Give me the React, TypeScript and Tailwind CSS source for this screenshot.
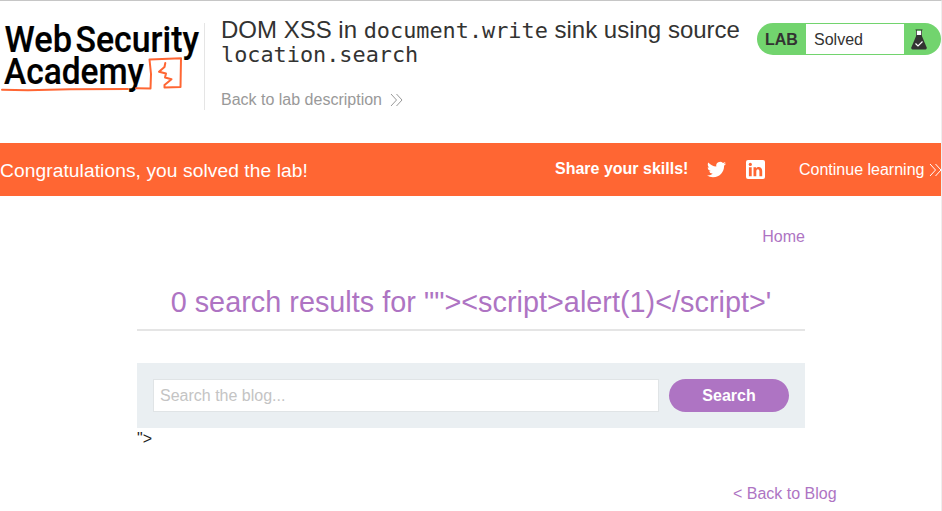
import React from "react";

const sans = "font-['Liberation_Sans',Arial,sans-serif]";

function Logo() {
  return (
    <svg width="204" height="90" viewBox="0 10 204 90" className="block shrink-0 overflow-visible" aria-label="Web Security Academy">
      <g fill="#000" stroke="#000" strokeWidth="0.2" fontFamily="Roboto, sans-serif" fontWeight="500" fontSize="37">
        <text x="4.5" y="51.5" textLength="67.5" lengthAdjust="spacingAndGlyphs">Web</text>
        <text x="75.5" y="51.5" textLength="123.5" lengthAdjust="spacingAndGlyphs">Security</text>
        <text x="4" y="84" textLength="140" lengthAdjust="spacingAndGlyphs">Academy</text>
      </g>
      <g fill="none" stroke="#ff6633" strokeWidth="2" strokeLinejoin="round" strokeLinecap="round">
        <path d="M2 89.7 L28 90.2 L70 89.3 L128 89" />
        <path d="M136 88.3 L150.5 88.5 L151 74 L149.5 59.5 L181 58.3 L180.5 87 L164.5 87.5 L164.5 85 L171.5 79.2 L165 77.5 L166 73.5 L159 71.8 L164.5 67 L165.3 63" />
      </g>
    </svg>
  );
}

function Chevrons({ color }: { color: string }) {
  return (
    <svg width="13" height="14" viewBox="0 0 13 14" fill="none" stroke={color} strokeWidth="1" className="block shrink-0">
      <path d="M1 1 L6.5 7 L1 13 M6.5 1 L12 7 L6.5 13" />
    </svg>
  );
}

function Flask() {
  return (
    <svg width="16" height="21" viewBox="0 0 16 21" className="block">
      <path d="M5 2 H11 V7 H5 Z" fill="#fff" />
      <path d="M5.5 6 H10.5 L15.7 18.5 Q16 20.4 14.5 20.4 H1.5 Q0 20.4 .3 18.5 Z" fill="#333332" />
      <path d="M4.5 .8 H11.5 M5.5 1 V7 M10.5 1 V7" stroke="#333332" strokeWidth="0.8" fill="none" />
      <path d="M4.5 14.5 L7 17 L11.5 12.5" stroke="#fff" strokeWidth="1.2" fill="none" />
    </svg>
  );
}

function LabStatus() {
  return (
    <div className="mt-[22px] flex h-8 w-[184px] shrink-0 items-center overflow-hidden rounded-full bg-[#72d46e] text-[#333332]">
      <span className="w-[49px] pl-2 pt-[2px] text-[16px] leading-6 font-bold">LAB</span>
      <span className="h-[30px] w-[98px] bg-white pl-2 text-base leading-[31px]">Solved</span>
      <span className="pl-[7px]">
        <Flask />
      </span>
    </div>
  );
}

export default function App() {
  return (
    <div className={`${sans} h-[511px] w-[942px] overflow-hidden border-t border-r border-t-[#c6c6c6] border-r-[#eeeeee] bg-white text-[#333332]`}>
      <header className="flex h-[142px]">
        <div className="w-[204px] shrink-0 pt-[9px]">
          <Logo />
        </div>
        <div className="mt-[22px] h-[87px] w-px shrink-0 bg-[#e5e5e5]" />
        <div className="ml-4 w-[536px] shrink-0 pt-[17px]">
          <h1 className="text-[24px] leading-[24px] whitespace-nowrap">
            <span className="block h-[25px]">
              DOM XSS in <code className="font-['DejaVu_Sans_Mono',monospace] text-[21.85px] leading-none">document.write</code> sink using source
            </span>
            <code className="block h-6 font-['DejaVu_Sans_Mono',monospace] text-[21.85px] leading-[24px]">location.search</code>
          </h1>
          <a className="mt-[23px] flex items-center gap-[8px] text-base leading-5 text-[#999999]">
            Back to lab description
            <Chevrons color="#999999" />
          </a>
        </div>
        <LabStatus />
      </header>

      <section className="flex h-[53px] items-center overflow-hidden bg-[#ff6633] text-white">
        <p className="w-[555px] shrink-0 pt-[2px] text-[19.2px] leading-6 tracking-[0.08px]">Congratulations, you solved the lab!</p>
        <p className="w-[152px] shrink-0 pb-[1px] text-base font-bold">Share your skills!</p>
        <svg width="19" height="19" viewBox="0 0 24 24" fill="#fff" className="shrink-0">
          <path d="M23.953 4.57a10 10 0 01-2.825.775 4.958 4.958 0 002.163-2.723 9.9 9.9 0 01-3.127 1.184 4.92 4.92 0 00-8.384 4.482C7.69 8.095 4.067 6.13 1.64 3.162a4.822 4.822 0 00-.666 2.475c0 1.71.87 3.213 2.188 4.096a4.904 4.904 0 01-2.228-.616v.06a4.923 4.923 0 003.946 4.827 4.996 4.996 0 01-2.212.085 4.936 4.936 0 004.604 3.417 9.867 9.867 0 01-6.102 2.105c-.39 0-.779-.023-1.17-.067a13.995 13.995 0 007.557 2.209c9.053 0 13.998-7.496 13.998-13.985 0-.21 0-.42-.015-.63A9.935 9.935 0 0024 4.59z" />
        </svg>
        <svg width="19" height="19" viewBox="0 0 19 19" className="ml-5 shrink-0">
          <rect width="19" height="19" rx="2" fill="#fff" />
          <g fill="#ff6633">
            <circle cx="4.3" cy="4.4" r="1.6" />
            <path d="M2.9 7.2 H5.7 V16.2 H2.9 Z M7.5 7.2 H10.1 V8.4 C11.5 6.3 16.2 6.3 16.2 11 V16.2 H13.4 V11.5 C13.4 8.5 10.3 8.6 10.3 11.5 V16.2 H7.5 Z" />
          </g>
        </svg>
        <a className="ml-[34px] flex shrink-0 items-center gap-[5px] text-base whitespace-nowrap">
          Continue learning
          <Chevrons color="#ffffff" />
        </a>
      </section>

      <main className="ml-[137px] w-[668px]">
        <nav className="flex justify-end pt-[29px] text-base leading-6 text-[#ae74c3]">
          <a>Home</a>
        </nav>
        <h2 className="mt-[33px] h-[49px] border-b-2 border-[#e5e5e5] text-center text-[28.8px] leading-[41px] tracking-[0.02px] whitespace-nowrap text-[#ae74c3]">
          {'0 search results for ""><script>alert(1)</script>\''}
        </h2>
        <div className="mt-8 flex h-[65px] gap-[10px] bg-[#eaeff2] p-4">
          <input
            placeholder="Search the blog..."
            className="h-[33px] w-[506px] border border-[#e0e4e6] bg-white px-[6px] text-base outline-none placeholder:text-[#c4c4c4]"
          />
          <button className="h-[33px] w-[120px] rounded-full bg-[#ae74c3] text-base font-bold text-white">Search</button>
        </div>
        <p className="text-base leading-[22px] text-[#222]">{"\">"}</p>
        <a className="mt-8 ml-[596px] block text-base leading-6 whitespace-nowrap text-[#ae74c3]">&lt; Back to Blog</a>
      </main>
    </div>
  );
}
